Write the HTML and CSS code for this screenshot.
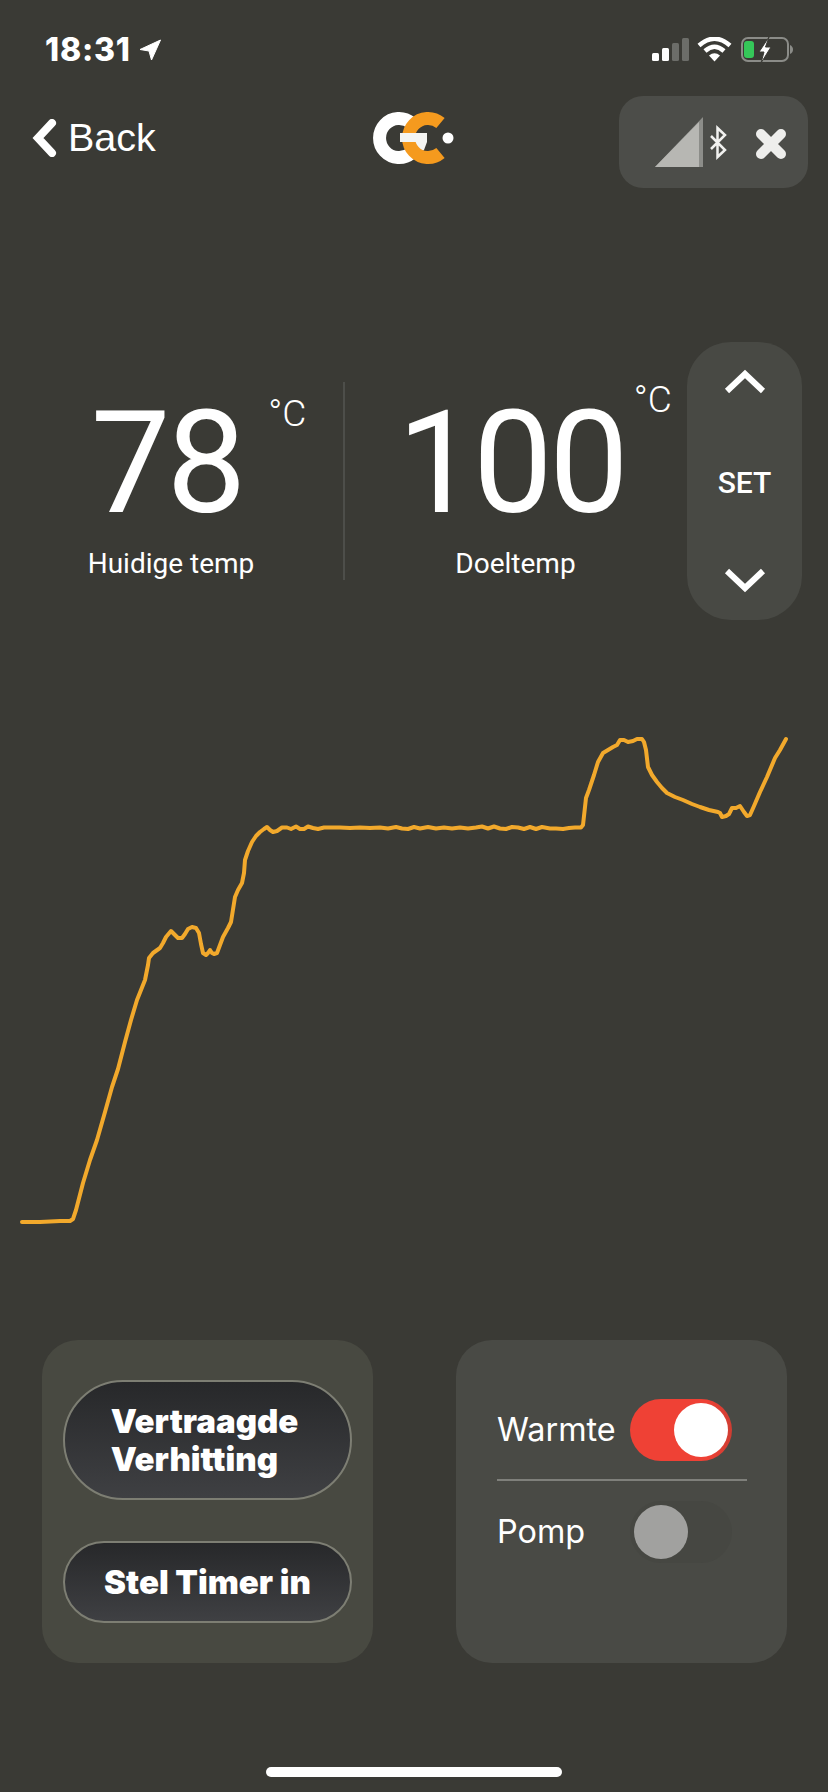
FILE: index.html
```html
<html>
<head>
    <title>Ketel</title>
    <link rel="stylesheet" href="styles.css">
</head>

<body>
<div class="screen">
    <div class="status-bar">
        <div class="status-time">
            <span>18:31</span>
            <svg class="status-arrow" width="22" height="22" viewBox="0 0 22 22">
                <path d="M21.500 1 L1 10.500 L10 12 L12.500 21 Z" fill="#fff" stroke="#fff" stroke-width="1" stroke-linejoin="round"/>
            </svg>
        </div>
        <svg class="status-icons" width="142" height="27" viewBox="653 37 142 27">
            <!-- signal -->
            <rect x="653" y="53" width="7" height="8" rx="1.500" fill="#fff"/>
            <rect x="663" y="48" width="7" height="13" rx="1.500" fill="#fff"/>
            <rect x="673" y="43" width="7" height="18" rx="1.500" fill="#6c6d69"/>
            <rect x="683" y="38" width="7" height="23" rx="1.500" fill="#6c6d69"/>
            <!-- wifi -->
            <path d="M700 45.500 Q715.500 32 731 45.500" fill="none" stroke="#fff" stroke-width="4.500"/>
            <path d="M706 51 Q715.500 42.500 725 51" fill="none" stroke="#fff" stroke-width="4.500"/>
            <path d="M710 55.500 Q715.500 51 721 55.500 L715.500 61.500 Z" fill="#fff"/>
            <!-- battery -->
            <rect x="743" y="38" width="46" height="23" rx="6" fill="none" stroke="#8b8c88" stroke-width="2"/>
            <path d="M791 45 Q794 46.500 794 49.500 Q794 52.500 791 54 Z" fill="#8b8c88"/>
            <rect x="745" y="41" width="10" height="17" rx="3" fill="#35c759"/>
            <path d="M770 37 L760 52 L765 52 L762 63 L772 47 L766.500 47 Z" fill="#fff" stroke="#3a3a35" stroke-width="1"/>
        </svg>
    </div>

    <div class="nav-bar">
        <a class="back-link">
            <svg width="26" height="38" viewBox="0 0 26 38">
                <path d="M21 4 L7 19 L21 34" fill="none" stroke="#fff" stroke-width="8" stroke-linejoin="miter" stroke-linecap="round"/>
            </svg>
            <span>Back</span>
        </a>

        <svg class="logo" width="86" height="56" viewBox="371 110 86 56">
            <path d="M411.500 123 A19.500 19.500 0 1 0 411.500 153" fill="none" stroke="#fff" stroke-width="13"/>
            <path d="M414 142 L427 142 L424 150 L417 156 Z" fill="#f4f4f2"/>
            <path d="M440.500 123 A19.500 19.500 0 1 0 440.500 153" fill="none" stroke="#f59a1e" stroke-width="13"/>
            <rect x="400" y="133" width="27" height="9" fill="#f4f4f2"/>
            <circle cx="448" cy="138" r="5.500" fill="#fff"/>
        </svg>

        <div class="connection">
            <svg width="189" height="92" viewBox="619 96 189 92">
                <path d="M655 167 L703 117 L703 167 Z" fill="#8c8d89"/>
                <path d="M655 167 L699 122 L699 167 Z" fill="#b7b7b3"/>
                <path d="M711 136 L725 150 L717.500 157 L717.500 128 L725 135 L711 149" fill="none" stroke="#f1f1ef" stroke-width="2.500"/>
                <path d="M761 134 L781 154 M781 134 L761 154" fill="none" stroke="#eeeeec" stroke-width="10" stroke-linecap="round"/>
            </svg>
        </div>
    </div>

    <div class="temp-row">
        <div class="temp-block temp-current">
            <div class="temp-value">78<span class="temp-unit unit-low">°C</span></div>
            <div class="temp-label">Huidige temp</div>
        </div>
        <div class="temp-divider"></div>
        <div class="temp-block temp-target">
            <div class="temp-value">100<span class="temp-unit unit-high">°C</span></div>
            <div class="temp-label">Doeltemp</div>
        </div>
        <div class="set-panel">
            <svg width="42" height="26" viewBox="0 0 42 26">
                <path d="M3 22 L21 5 L39 22" fill="none" stroke="#fff" stroke-width="6"/>
            </svg>
            <span class="set-text">SET</span>
            <svg width="42" height="26" viewBox="0 0 42 26">
                <path d="M3 4 L21 21 L39 4" fill="none" stroke="#fff" stroke-width="6"/>
            </svg>
        </div>
    </div>

    <svg class="chart" width="828" height="720" viewBox="0 620 828 720">
        <polyline fill="none" stroke="#f2a92c" stroke-width="4" stroke-linejoin="round" stroke-linecap="round"
            points="22,1222 40,1222 60,1221 70,1221 73,1219 76,1210 83,1183 90,1160 97,1140 105,1112 112,1087 118,1069 125,1042 131,1020 137,1000 145,980 148,965 149,958 153,953 160,948 163,943 166,937 171,931 175,935 178,938 182,938 185,934 188,929 192,927 196,928 199,933 201,944 203,953 206,955 208,953 210,950 212,953 214,954 217,953 220,945 223,937 228,928 231,922 235,897 238,890 242,883 244,873 245,860 248,851 252,842 256,836 260,832 264,829 267,827 270,830 273,832 277,831 282,827.500 287,827.500 291,829 296,826.500 300,829 304,829 308,826.500 313,828 318,829 324,827.500 332,827.500 340,827.500 350,828 360,827.500 370,828 380,827.500 388,828.500 396,827 402,828.500 408,829 414,827 420,828.500 428,827 436,828.500 444,827.500 452,828.500 460,827.500 468,828.500 476,827.500 482,826.500 488,828.500 494,826.500 500,828.500 506,829 512,827 518,827.500 524,829 530,827 536,829 542,827 550,828.500 556,828.500 563,829 569,828 575,827.500 581,827.500 583,825 586,798 589,790 594,775 598,762 603,753 608,750 613,747 617,745 620,740 624,740 628,742 633,741 637,739 642,739 644,742 646,750 648,767 652,775 657,782 662,788 667,793 675,797 683,800 692,804 700,807 709,810 718,812 720,813 722,817 726,816 729,814 732,808 736,808 740,806 744,812 747,816 750,815 754,806 760,792 767,777 775,758 780,750 786,739"/>
    </svg>

    <div class="controls">
        <div class="card card-buttons">
            <button class="pill pill-tall"><span>Vertraagde<br>Verhitting</span></button>
            <button class="pill pill-short"><span>Stel Timer in</span></button>
        </div>
        <div class="card card-switches">
            <div class="switch-row">
                <span class="switch-label">Warmte</span>
                <div class="switch switch-on"><div class="switch-thumb"></div></div>
            </div>
            <div class="switch-line"></div>
            <div class="switch-row">
                <span class="switch-label">Pomp</span>
                <div class="switch switch-off"><div class="switch-thumb"></div></div>
            </div>
        </div>
    </div>

    <div class="home-bar"></div>
</div>
</body>
</html>
```

FILE: styles.css
```css
body {
    margin: 0;
    background-color: #3a3a35;
    color: white;
    font-family: "Roboto", sans-serif;
}

.screen {
    width: 828px;
    height: 1792px;
    overflow: hidden;
}

/* top status bar */
.status-bar {
    display: flex;
    justify-content: space-between;
    align-items: flex-start;
    box-sizing: border-box;
    height: 96px;
    padding: 37px 34px 0 45px;
}

.status-time {
    display: flex;
    align-items: center;
    gap: 8px;
    height: 25px;
    font-family: "Inter", sans-serif;
    font-size: 32px;
    font-weight: 800;
    letter-spacing: 0.800px;
}

.status-icons {
    display: block;
}

/* back link, logo, bluetooth box */
.nav-bar {
    display: grid;
    grid-template-columns: 340px 86px 1fr;
    align-items: center;
    height: 92px;
    padding-right: 20px;
    padding-left: 31px;
}

.back-link {
    display: flex;
    align-items: center;
    gap: 11px;
    margin-top: -9px;
    font-family: "Liberation Sans", sans-serif;
    font-size: 39.500px;
}

.logo {
    display: block;
    margin-top: -8px;
}

.connection {
    justify-self: end;
    width: 189px;
    height: 92px;
    border-radius: 24px;
    background-color: #4c4d49;
}

.connection svg {
    display: block;
}

/* temperature readouts */
.temp-row {
    display: flex;
    height: 278px;
    margin-top: 154px;
    padding-right: 26px;
}

.temp-block {
    display: flex;
    flex-direction: column;
    align-items: center;
    padding-top: 51px;
}

.temp-current {
    width: 343px;
}

.temp-target {
    width: 342px;
}

.temp-value {
    position: relative;
    margin-left: -10px;
    font-size: 142px;
    line-height: 142px;
    letter-spacing: -4px;
}

.temp-unit {
    position: absolute;
    font-size: 37px;
    font-weight: 300;
    line-height: 42px;
    letter-spacing: 0;
}

.unit-low {
    top: 0;
    left: calc(100% + 26px);
}

.unit-high {
    top: -14px;
    left: calc(100% + 9px);
}

.temp-label {
    margin-top: 13px;
    margin-left: -1px;
    font-size: 28px;
    line-height: 32px;
}

.temp-divider {
    width: 2px;
    height: 198px;
    margin-top: 40px;
    background-color: #4d4e4a;
}

.set-panel {
    display: flex;
    flex-direction: column;
    justify-content: space-between;
    align-items: center;
    box-sizing: border-box;
    width: 115px;
    padding: 27px 0;
    border-radius: 44px;
    background-color: #484944;
}

.set-text {
    margin-top: 2px;
    font-size: 30px;
    font-weight: 500;
}

.chart {
    display: block;
}

/* bottom cards */
.controls {
    display: flex;
    justify-content: space-between;
    padding: 0 41px 0 42px;
}

.card {
    box-sizing: border-box;
    width: 331px;
    height: 323px;
    border-radius: 36px;
}

.card-buttons {
    display: flex;
    flex-direction: column;
    gap: 41px;
    padding: 40px 21px 0;
    background-color: #484941;
}

.pill {
    display: flex;
    justify-content: center;
    align-items: center;
    box-sizing: border-box;
    width: 289px;
    padding: 0;
    border: 2px solid #7d7e73;
    background: linear-gradient(#27282a, #3f4043);
    color: white;
    font-family: "Inter", sans-serif;
    font-size: 33px;
    font-weight: 900;
    line-height: 38px;
    text-align: left;
}

.pill-tall {
    height: 120px;
    padding-right: 6px;
    border-radius: 60px;
}

.pill-short {
    height: 82px;
    border-radius: 41px;
}

.card-switches {
    padding: 59px 40px 0 41px;
    background-color: #494a45;
    font-family: "Inter", sans-serif;
}

.switch-row {
    display: flex;
    align-items: center;
}

.switch-label {
    width: 133px;
    margin-top: -1px;
    font-size: 32.400px;
}

.switch {
    display: flex;
    align-items: center;
    box-sizing: border-box;
    width: 102px;
    height: 62px;
    padding: 0 4px;
    border-radius: 31px;
}

.switch-thumb {
    width: 54px;
    height: 54px;
    border-radius: 50%;
}

.switch-on {
    justify-content: flex-end;
    background: linear-gradient(90deg, #ef4135 75%, #cf3d32);
}

.switch-on .switch-thumb {
    background-color: white;
}

.switch-off {
    background-color: #464742;
}

.switch-off .switch-thumb {
    background-color: #a1a19f;
}

.switch-line {
    height: 2px;
    margin: 18px 0 20px;
    background-color: #7f807b;
}

.home-bar {
    width: 296px;
    height: 10px;
    margin: 104px auto 0;
    border-radius: 5px;
    background-color: white;
}
```
